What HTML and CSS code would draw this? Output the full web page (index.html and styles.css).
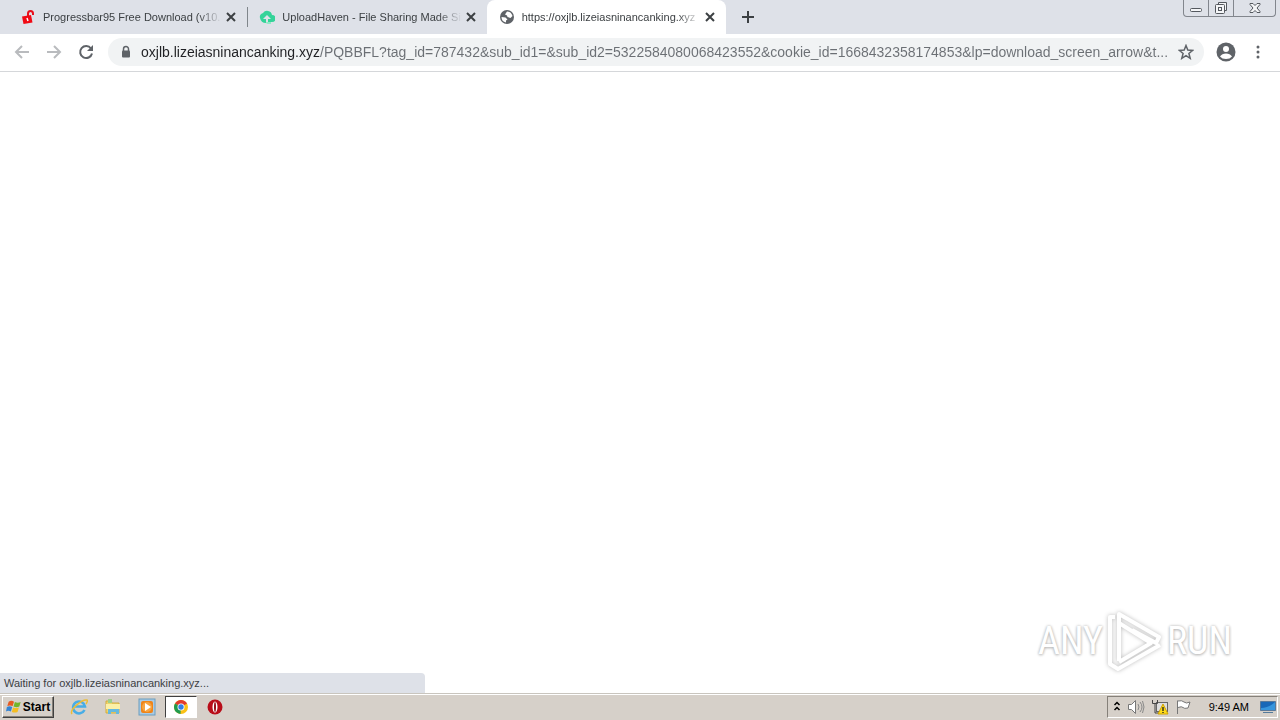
FILE: index.html
```html
<!DOCTYPE html>
<html lang="en">
<head>
  <meta charset="UTF-8" />
  <meta name="viewport" content="width=device-width, initial-scale=1.0"/>
  <title>oxjlb.lizeiasninancanking.xyz</title>
  <link rel="stylesheet" href="styles.css">
</head>
<body>
  <header class="tab-bar">
    <div class="tabs">
      <div class="tab">
        <svg class="favicon" viewBox="0 0 16 16"><path d="M8 7V4.500q0-2.500 2.500-2.500t2.500 2.500V6" fill="none" stroke="#e8101c" stroke-width="2"/><path d="M2 7.500l9-1.500 1.500 7.500-9 1.500z" fill="#f00a14"/><path d="M7 9l1 3" stroke="#fff" stroke-width="1.500"/></svg>
        <a class="tab-title" href="#">Progressbar95 Free Download (v10.</a>
        <button class="close" aria-label="Close tab"><svg viewBox="0 0 16 16"><path d="M4 4l8 8M12 4l-8 8"/></svg></button>
      </div>
      <div class="tab divided">
        <svg class="favicon" viewBox="0 0 16 16"><path d="M1 9a4 4 0 0 1 3-5 5 5 0 0 1 9 2 3.500 3.500 0 0 1 0 7H9v-3h3L8 6 4 10h3v4Q2 14 1 9z" fill="#34d399"/><path d="M7 13h5v2H9q-2 0-2-2z" fill="#8eeac5"/></svg>
        <a class="tab-title" href="#">UploadHaven - File Sharing Made Sin</a>
        <button class="close" aria-label="Close tab"><svg viewBox="0 0 16 16"><path d="M4 4l8 8M12 4l-8 8"/></svg></button>
      </div>
      <div class="tab active">
        <svg class="favicon" viewBox="0 0 16 16"><circle cx="8" cy="8" r="7" fill="#5f6368"/><path d="M2.500 8l4 .5 2 2-1.500 1v2Q2.500 12.500 2.500 8zM8 2.500q4 0 5.500 4.500l-2 2-3-1-.5-1.500L6 5.500z" fill="#fff"/></svg>
        <a class="tab-title" href="#">https://oxjlb.lizeiasninancanking.xyz</a>
        <button class="close" aria-label="Close tab"><svg viewBox="0 0 16 16"><path d="M4 4l8 8M12 4l-8 8"/></svg></button>
      </div>
    </div>
    <button class="new-tab" aria-label="New tab"><svg viewBox="0 0 16 16"><path d="M8 2v12M2 8h12"/></svg></button>
    <div class="window-buttons">
      <button aria-label="Minimize"><svg viewBox="0 0 16 16"><rect x="2.500" y="8.500" width="11" height="3" rx="1"/></svg></button>
      <button aria-label="Restore"><svg viewBox="0 0 16 16"><path d="M5.500 4.500v-2h8v8h-2"/><rect x="2.500" y="4.500" width="9" height="9" rx="1"/><rect x="5.500" y="7.500" width="3" height="3"/></svg></button>
      <button class="window-close" aria-label="Close"><svg viewBox="0 0 16 16"><path d="M3 3.500h3l2 2 2-2h3v1L10 8l3 3.500v1h-3l-2-2-2 2H3v-1L6 8 3 4.500z"/></svg></button>
    </div>
  </header>

  <nav class="toolbar">
    <button class="nav-button disabled" aria-label="Back"><svg viewBox="0 0 16 16"><path d="M15 8H2M8 2L2 8l6 6"/></svg></button>
    <button class="nav-button disabled" aria-label="Forward"><svg viewBox="0 0 16 16"><path d="M1 8h13M8 2l6 6-6 6"/></svg></button>
    <button class="nav-button" aria-label="Reload"><svg viewBox="0 0 16 16"><path d="M13 4.500A6 6 0 1 0 14 9.500"/><path d="M15 1v6H9z" fill="#5f6368" stroke="none"/></svg></button>
    <div class="address-bar">
      <svg class="lock" viewBox="0 0 16 16"><path d="M5.500 7V5a2.500 2.500 0 0 1 5 0v2" fill="none" stroke="#5f6368" stroke-width="1.500"/><rect x="4" y="6.500" width="8" height="7" rx="1" fill="#5f6368"/></svg>
      <input class="address" type="text" aria-label="Address" value="oxjlb.lizeiasninancanking.xyz/PQBBFL?tag_id=787432&amp;sub_id1=&amp;sub_id2=5322584080068423552&amp;cookie_id=1668432358174853&amp;lp=download_screen_arrow&amp;t..." />
      <button class="star" aria-label="Bookmark this tab"><svg viewBox="0 0 16 16"><path d="M8 1.500l1.800 4.600 4.900.3-3.800 3.100 1.300 4.800L8 11.600l-4.200 2.700 1.300-4.800-3.800-3.100 4.900-.3z"/></svg></button>
    </div>
    <button class="profile" aria-label="Profile"><svg viewBox="0 0 20 20"><circle cx="10" cy="10" r="9.500" fill="#5f6368"/><circle cx="10" cy="7" r="3" fill="#fff"/><path d="M4 14.500q2-3 6-3t6 3q-2 2.500-6 2.500t-6-2.500z" fill="#fff"/></svg></button>
    <button class="menu" aria-label="Menu"><svg viewBox="0 0 16 16"><circle cx="8" cy="3" r="1.500"/><circle cx="8" cy="8" r="1.500"/><circle cx="8" cy="13" r="1.500"/></svg></button>
  </nav>

  <main class="page">
    <div class="watermark">
      <span>ANY</span>
      <svg viewBox="0 0 60 64"><path d="M10 8H5v47l8 5 42-24M14 52V5l40 23-3 6-24-13"/><path d="M14 14l32 20-32 19"/></svg>
      <span>RUN</span>
    </div>
    <div class="status">Waiting for oxjlb.lizeiasninancanking.xyz...</div>
  </main>

  <footer class="taskbar">
    <button class="start">
      <svg viewBox="0 0 18 16"><path d="M3 2q3-2 6 0L7.500 7q-3-1.500-6 0z" fill="#e65a22"/><path d="M10 2.500q3 1.500 6.500 0L15 7.500q-3 1.500-6.500 0z" fill="#72b52c"/><path d="M1 8q3-1.500 6 0l-1.500 5q-3-1.500-5.500 0z" fill="#3484d4"/><path d="M8 8.500q3 1.500 6.500 0L13 13.500q-3 1.500-6.500 0z" fill="#f4bd23"/></svg>
      Start
    </button>
    <div class="shortcuts">
      <button aria-label="Internet Explorer"><svg viewBox="0 0 18 18"><path d="M14.500 12A6 6 0 1 1 15 8.500H5" fill="none" stroke="#48ade6" stroke-width="2.500"/><path d="M2 16C-1 12 12 1 17 2q1 1-1 4" fill="none" stroke="#edbd35" stroke-width="1.500"/></svg></button>
      <button aria-label="Windows Explorer"><svg viewBox="0 0 18 18"><path d="M2 3h5l1 2h7v10H2z" fill="#efd36a" stroke="#d2ad41"/><path d="M4 1h4v4H4z" fill="#9fd08a"/><path d="M2 6h14v5H2z" fill="#fbf0a7"/><path d="M4 16v-5h11v5h-3v-2H7v2z" fill="#65b9df"/></svg></button>
      <button aria-label="Media Player"><svg viewBox="0 0 18 18"><rect x="1" y="1" width="16" height="16" fill="#a9cbe4" stroke="#6b9dbf"/><rect x="3" y="3" width="12" height="12" rx="2" fill="#ef8418"/><circle cx="9" cy="9" r="5" fill="#f7a541"/><path d="M7 5l6 4-6 4z" fill="#fff"/></svg></button>
      <button class="running" aria-label="Chrome"><svg viewBox="0 0 18 18"><circle cx="9" cy="9" r="7" fill="#fbc116"/><path d="M9 9L3 5.400A7 7 0 0 1 15 5.400z" fill="#e33b2e"/><path d="M9 9L3 5.400A7 7 0 0 0 8.500 16z" fill="#219b4e"/><circle cx="9" cy="9" r="3.500" fill="#fff"/><circle cx="9" cy="9" r="2.700" fill="#347fe5"/></svg></button>
      <button aria-label="Opera"><svg viewBox="0 0 18 18"><circle cx="9" cy="9" r="7.500" fill="#b90d19"/><ellipse cx="9" cy="9" rx="2.500" ry="5.500" fill="#fff"/><ellipse cx="9" cy="9" rx="1" ry="5" fill="#97101a"/></svg></button>
    </div>
    <div class="tray">
      <button aria-label="Show hidden icons"><svg class="chevrons" viewBox="0 0 8 16"><path d="M1.500 6L4 3.500 6.500 6M1.500 11L4 8.500 6.500 11"/></svg></button>
      <button aria-label="Volume"><svg viewBox="0 0 18 16"><path d="M1.500 5.500h3l4-4v13l-4-4h-3z" fill="#fff" stroke="#777"/><path d="M11 5q2 3 0 6M13 3q4 5 0 10M15.500 2q3 6 0 12" fill="none" stroke="#888"/></svg></button>
      <button aria-label="Network"><svg viewBox="0 0 18 16"><rect x="5.500" y="3.500" width="11" height="9" fill="#dedede" stroke="#666"/><path d="M1.500 1v3.500h5V1M4 5v9h4" fill="none" stroke="#444"/><path d="M12 5l5 10H7z" fill="#ffdc18" stroke="#d0a200"/><path d="M12 8v4M12 13v1" stroke="#332" stroke-width="1.500"/></svg></button>
      <button aria-label="Action Center"><svg viewBox="0 0 18 16"><path d="M2.500 15V1.500M3 2q4-1 6 1t6 0l-2 6q-4 1-5-.5T3 8.500" fill="#fff" stroke="#777"/></svg></button>
      <time>9:49 AM</time>
      <button aria-label="Show desktop"><svg viewBox="0 0 18 16"><path d="M1.500 2.500h15v9h-15z" fill="#1968b8" stroke="#59799a"/><path d="M2 9q8 0 14-6v8H2z" fill="#3795dc"/><path d="M4 13.500h10" stroke="#557a9a"/></svg></button>
    </div>
  </footer>
</body>
</html>
```
FILE: styles.css
```css
* {
  margin: 0;
  padding: 0;
  box-sizing: border-box;
}

body {
  display: flex;
  flex-direction: column;
  height: 100vh;
  overflow: hidden;
  background: #fff;
  font-family: 'Liberation Sans', Arial, sans-serif;
  font-size: 11px;
  color: #3c4043;
}

button {
  display: flex;
  align-items: center;
  justify-content: center;
  border: none;
  background: none;
  font-family: inherit;
  flex-shrink: 0;
}

svg {
  display: block;
  width: 16px;
  height: 16px;
  flex-shrink: 0;
}

.tab-bar {
  display: flex;
  align-items: flex-start;
  height: 34px;
  background: #dee1e8;
  padding-left: 8px;
  flex-shrink: 0;
}

.tabs {
  display: flex;
  flex: 0 1 718px;
  min-width: 0;
  height: 34px;
}

.tab {
  display: flex;
  align-items: center;
  flex: 1;
  min-width: 0;
  padding: 0 8px 0 12px;
}

.tab.divided {
  background: linear-gradient(#80868b, #80868b) left center / 1px 20px no-repeat;
}

.tab.active {
  background: #fff;
  border-radius: 8px 8px 0 0;
}

.tab-title {
  flex: 1;
  min-width: 0;
  margin: 0 1px 0 7px;
  overflow: hidden;
  white-space: nowrap;
  color: #3c4043;
  text-decoration: none;
  -webkit-mask-image: linear-gradient(to left, transparent, #000 24px);
  mask-image: linear-gradient(to left, transparent, #000 24px);
}

.close svg {
  fill: none;
  stroke: #3c4043;
  stroke-width: 2;
}

.new-tab svg {
  fill: none;
  stroke: #3c4043;
  stroke-width: 2;
}

.new-tab {
  width: 28px;
  height: 34px;
  margin-left: 8px;
}

.window-buttons {
  display: flex;
  margin: 0 4px 0 auto;
  height: 17px;
  border: 1px solid #82868d;
  border-top: none;
  border-radius: 0 0 4px 4px;
}

.window-buttons button {
  width: 25px;
  border-right: 1px solid #82868d;
}

.window-buttons .window-close {
  width: 41px;
  border-right: none;
}

.window-buttons svg {
  fill: #f4f5f7;
  stroke: #54585e;
}

.toolbar {
  display: flex;
  align-items: center;
  height: 38px;
  padding: 0 14px 1px;
  border-bottom: 1px solid #d5d7da;
  flex-shrink: 0;
}

.nav-button {
  width: 16px;
  margin-right: 16px;
}

.nav-button svg {
  fill: none;
  stroke: #5f6368;
  stroke-width: 2;
}

.nav-button.disabled svg {
  stroke: #b9bbbe;
}

.address-bar {
  display: flex;
  align-items: center;
  flex: 1;
  min-width: 0;
  height: 28px;
  padding: 0 10px;
  margin-left: -2px;
  border-radius: 14px;
  background: #f1f3f4;
}

.address {
  flex: 1;
  min-width: 0;
  height: 28px;
  margin: 0 8px 0 7px;
  border: none;
  outline: none;
  font-family: inherit;
  font-size: 14px;
  color: #5f6368;
  background: linear-gradient(to right, #202124 179px, #6b6f74 179px);
  -webkit-background-clip: text;
  background-clip: text;
  -webkit-text-fill-color: transparent;
}

.star svg {
  fill: none;
  stroke: #5f6368;
  stroke-width: 1.5;
}

.profile {
  margin: 0 14px 0 12px;
}

.profile svg {
  width: 20px;
  height: 20px;
}

.menu svg {
  fill: #5f6368;
}

.page {
  display: flex;
  flex: 1;
  position: relative;
  min-height: 0;
}

.watermark {
  position: absolute;
  right: 48px;
  bottom: 20px;
  display: flex;
  align-items: center;
  gap: 2px;
  font-family: 'Roboto Condensed', 'Roboto', sans-serif;
  font-size: 38px;
  color: #fff;
  text-shadow: 0 0 3px #bbb, 0 1px 3px #bbb;
}

.watermark svg {
  width: 60px;
  height: 64px;
  fill: none;
  stroke: #fff;
  stroke-width: 4;
  stroke-linejoin: round;
  filter: drop-shadow(0 0 2px #bbb);
}

.status {
  align-self: flex-end;
  width: 425px;
  max-width: 100%;
  height: 20px;
  padding: 0 4px;
  line-height: 20px;
  background: #dee1e8;
  border-radius: 0 4px 0 0;
}

.taskbar {
  display: flex;
  align-items: center;
  height: 27px;
  padding: 2px;
  background: #d6d0c9;
  border-top: 1px solid #c9c5be;
  box-shadow: inset 0 1px #fff;
  flex-shrink: 0;
}

.start {
  gap: 1px;
  width: 52px;
  height: 22px;
  border: 1px solid;
  border-color: #fff #404040 #404040 #fff;
  box-shadow: inset -1px -1px #858079;
  font-size: 12px;
  font-weight: bold;
  color: #000;
}

.shortcuts {
  display: flex;
  margin-left: 9px;
  gap: 2px;
}

.shortcuts button {
  width: 32px;
  height: 22px;
}

.shortcuts svg {
  width: 18px;
  height: 18px;
}

.shortcuts .running {
  background: #fff;
  border: 1px solid;
  border-color: #404040 #fff #fff #404040;
}

.tray {
  display: flex;
  align-items: center;
  gap: 6px;
  height: 22px;
  margin-left: auto;
  padding: 0 0 0 5px;
  border: 1px solid;
  border-color: #858079 #fff #fff #858079;
  color: #000;
}

.tray svg {
  width: 18px;
}

.tray .chevrons {
  width: 8px;
  fill: none;
  stroke: #000;
  stroke-width: 1.5;
}

.tray time {
  margin: 0 4px 0 10px;
}
```
